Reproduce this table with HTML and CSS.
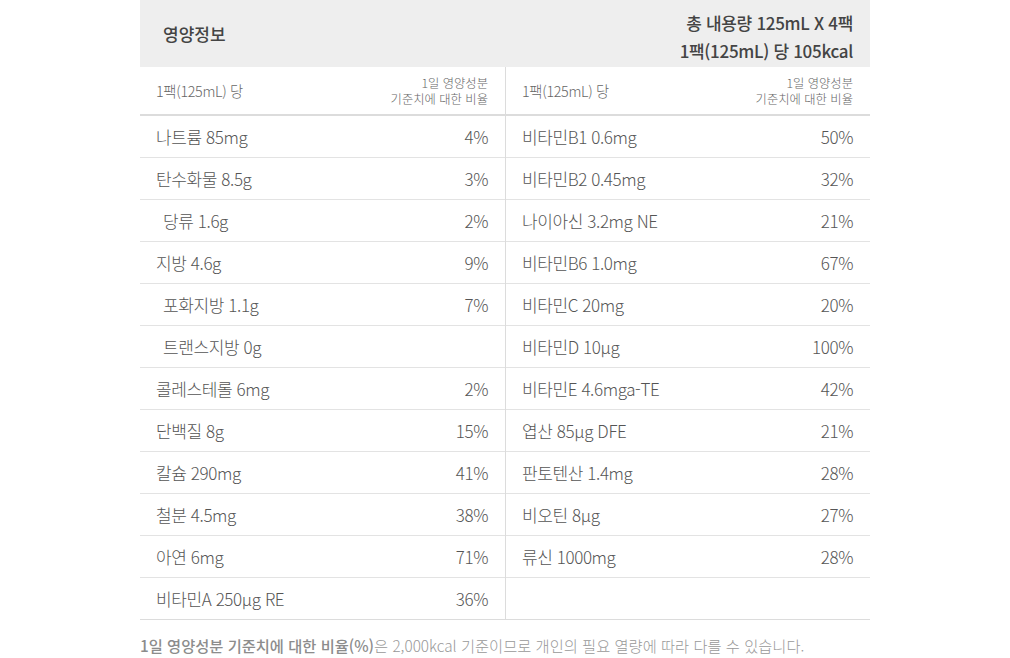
FILE: index.html
```html
<!DOCTYPE html>
<html lang="ko">
<head>
<meta charset="utf-8">
<link rel="stylesheet" href="styles.css">
</head>
<body>
<div class="wrap">
  <div class="head">
    <div class="title">영양정보</div>
    <div class="total">총 내용량 125mL X 4팩<br>1팩(125mL) 당 105kcal</div>
  </div>
  <div class="table">
    <div class="col left">
      <div class="sub"><span>1팩(125mL) 당</span><span class="ratio">1일 영양성분<br>기준치에 대한 비율</span></div>
      <div class="row"><span>나트륨 85mg</span><span>4%</span></div>
      <div class="row"><span>탄수화물 8.5g</span><span>3%</span></div>
      <div class="row ind"><span>당류 1.6g</span><span>2%</span></div>
      <div class="row"><span>지방 4.6g</span><span>9%</span></div>
      <div class="row ind"><span>포화지방 1.1g</span><span>7%</span></div>
      <div class="row ind"><span>트랜스지방 0g</span><span></span></div>
      <div class="row"><span>콜레스테롤 6mg</span><span>2%</span></div>
      <div class="row"><span>단백질 8g</span><span>15%</span></div>
      <div class="row"><span>칼슘 290mg</span><span>41%</span></div>
      <div class="row"><span>철분 4.5mg</span><span>38%</span></div>
      <div class="row"><span>아연 6mg</span><span>71%</span></div>
      <div class="row"><span>비타민A 250μg RE</span><span>36%</span></div>
    </div>
    <div class="col right">
      <div class="sub"><span>1팩(125mL) 당</span><span class="ratio">1일 영양성분<br>기준치에 대한 비율</span></div>
      <div class="row"><span>비타민B1 0.6mg</span><span>50%</span></div>
      <div class="row"><span>비타민B2 0.45mg</span><span>32%</span></div>
      <div class="row"><span>나이아신 3.2mg NE</span><span>21%</span></div>
      <div class="row"><span>비타민B6 1.0mg</span><span>67%</span></div>
      <div class="row"><span>비타민C 20mg</span><span>20%</span></div>
      <div class="row"><span>비타민D 10μg</span><span>100%</span></div>
      <div class="row"><span>비타민E 4.6mga-TE</span><span>42%</span></div>
      <div class="row"><span>엽산 85μg DFE</span><span>21%</span></div>
      <div class="row"><span>판토텐산 1.4mg</span><span>28%</span></div>
      <div class="row"><span>비오틴 8μg</span><span>27%</span></div>
      <div class="row"><span>류신 1000mg</span><span>28%</span></div>
      <div class="row"><span></span><span></span></div>
    </div>
  </div>
  <p class="note"><b>1일 영양성분 기준치에 대한 비율(%)</b>은 2,000kcal 기준이므로 개인의 필요 열량에 따라 다를 수 있습니다.</p>
</div>
</body>
</html>
```

FILE: styles.css
```css
* { box-sizing: border-box; }
html, body { margin: 0; padding: 0; background: #fff; }
body {
  font-family: "Noto Sans CJK KR", "Noto Sans", sans-serif;
  font-weight: 300;
  color: #555;
}
.wrap {
  width: 730px;
  margin-left: 140px;
}
.head {
  height: 67px;
  background: #eeeeee;
  display: flex;
  justify-content: space-between;
  align-items: center;
  padding: 0 17px 0 23px;
}
.title {
  font-size: 17px;
  font-weight: 500;
  color: #444;
  letter-spacing: 0;
}
.total {
  font-size: 17px;
  font-weight: 500;
  color: #444;
  text-align: right;
  line-height: 28px;
  letter-spacing: -0.3px;
  margin-top: 7px;
}
.table {
  display: grid;
  grid-template-columns: 366px 364px;
  border-bottom: 1px solid #dcdcdc;
}
.col.left { border-right: 1px solid #dcdcdc; }
.sub {
  height: 49px;
  display: flex;
  justify-content: space-between;
  align-items: center;
  border-bottom: 2px solid #dcdcdc;
  padding: 0 17px 0 16px;
  font-size: 14.3px;
  color: #666;
  letter-spacing: -0.3px;
}
.sub .ratio {
  font-size: 12.3px;
  line-height: 16px;
  text-align: right;
  letter-spacing: 0;
  margin-top: 1px;
}
.row {
  height: 42px;
  display: flex;
  justify-content: space-between;
  align-items: center;
  border-top: 1px solid #e3e3e3;
  padding: 0 17px 0 16px;
  font-size: 17px;
  letter-spacing: -0.4px;
  color: #555;
}
.sub + .row { border-top: none; height: 41px; }
.row.ind { padding-left: 23px; }
.col.right .row, .col.right .sub { padding-left: 16px; }
.note {
  margin: 14px 0 0;
  font-size: 15.3px;
  color: #999;
  letter-spacing: 0;
}
.note b { font-weight: 500; color: #8c8c8c; }
```
